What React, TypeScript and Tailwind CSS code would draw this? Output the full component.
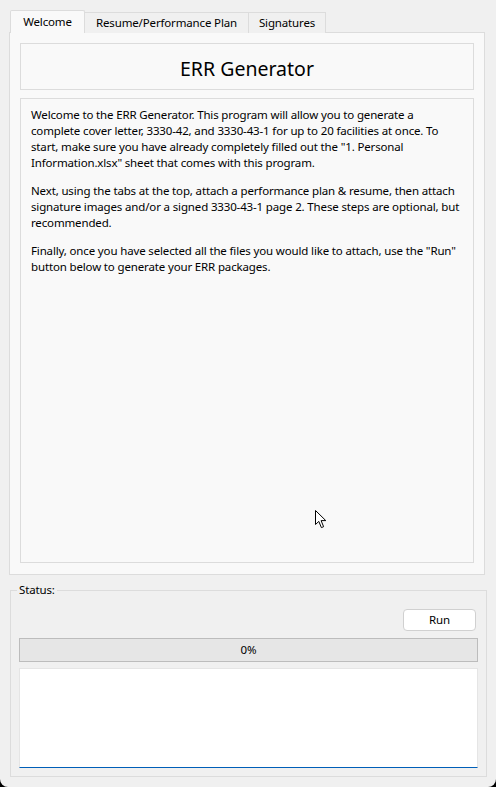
import React from "react";

const tabs = ["Welcome", "Resume/Performance Plan", "Signatures"];

const Cursor: React.FC = () => (
  <svg
    className="pointer-events-none absolute left-[314px] top-[509px]"
    width="14"
    height="21"
    viewBox="0 0 14 21"
  >
    <path
      d="M1.5 1.5 L1.5 15.5 L4.8 12.4 L7.4 18.6 L9.6 17.7 L7.1 11.6 L11.8 11.6 Z"
      fill="#ffffff"
      stroke="#000000"
      strokeWidth="1"
      strokeLinejoin="round"
    />
  </svg>
);

const App: React.FC = () => {
  const active = 0;

  return (
    <div className="h-[787px] w-[496px] bg-black font-['Noto_Sans',sans-serif] text-[11.5px] tracking-[-0.15px] text-black">
      <div className="relative flex h-full flex-col rounded-b-[8px] bg-[#f0f0f0]">
        {/* tab strip */}
        <div className="relative z-10 ml-[10px] mt-[10px] flex items-start whitespace-nowrap">
          {tabs.map((t, i) =>
            i === active ? (
              <div
                key={t}
                className="flex h-[23px] w-[75px] items-center justify-center rounded-t-[2px] border border-b-0 border-[#dcdcdc] bg-[#f9f9f9] pb-[1px] leading-none"
              >
                {t}
              </div>
            ) : (
              <div
                key={t}
                className={
                  "-ml-px mt-[2px] flex h-[21px] items-center justify-center border border-b-0 border-[#dcdcdc] bg-[#f0f0f0] leading-none " +
                  (i === 1 ? "w-[165px]" : "w-[78px]")
                }
              >
                {t}
              </div>
            ),
          )}
        </div>

        {/* tab pane */}
        <div className="ml-[9px] mr-[11px] -mt-px flex h-[543px] flex-col gap-[8px] border border-[#dcdcdc] bg-[#f9f9f9] px-[10px] pb-[11px] pt-[10px]">
          <div className="flex h-[47px] shrink-0 items-center justify-center border border-[#dcdcdc] pt-[4px] text-[19.5px] tracking-normal">
            ERR Generator
          </div>
          <div className="flex-1 whitespace-nowrap border border-[#dcdcdc] px-[10px] pt-[8px] leading-[16px]">
            <p>
              Welcome to the ERR Generator. This program will allow you to generate a<br />
              complete cover letter, 3330-42, and 3330-43-1 for up to 20 facilities at once. To<br />
              start, make sure you have already completely filled out the "1. Personal<br />
              Information.xlsx" sheet that comes with this program.
            </p>
            <p className="mt-[12px]">
              Next, using the tabs at the top, attach a performance plan &amp; resume, then attach<br />
              signature images and/or a signed 3330-43-1 page 2. These steps are optional, but<br />
              recommended.
            </p>
            <p className="mt-[12px]">
              Finally, once you have selected all the files you would like to attach, use the "Run"<br />
              button below to generate your ERR packages.
            </p>
          </div>
        </div>

        {/* status group */}
        <div className="relative ml-[10px] mr-[9px] mt-[15px] flex h-[187px] flex-col border border-[#dcdcdc] px-[8px] pt-[18px]">
          <span className="absolute -top-[9px] left-[6px] bg-[#f0f0f0] px-[2px] leading-[16px]">
            Status:
          </span>
          <div className="flex justify-end pr-[2px]">
            <button className="h-[22px] w-[73px] rounded-[4px] border border-[#d0d0d0] bg-white leading-none">
              Run
            </button>
          </div>
          <div className="mt-[7px] flex h-[24px] items-center justify-center border border-[#bcbcbc] bg-[#e6e6e6] leading-none">
            0%
          </div>
          <div className="mt-[6px] h-[100px] border border-[#e5e5e5] border-b-[#005fb8] bg-white" />
        </div>

        <Cursor />
      </div>
    </div>
  );
};

export default App;
